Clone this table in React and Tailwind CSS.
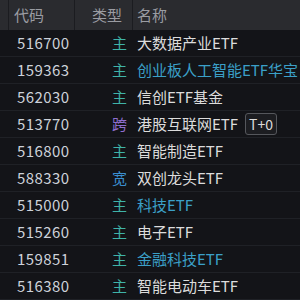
import React from "react";

const rows = [
  { code: "516700", type: "主", tc: "text-[#3fb3a8]", name: "大数据产业ETF", nc: "text-[#dcdcdc]" },
  { code: "159363", type: "主", tc: "text-[#3fb3a8]", name: "创业板人工智能ETF华宝", nc: "text-[#3ba0c8]" },
  { code: "562030", type: "主", tc: "text-[#3fb3a8]", name: "信创ETF基金", nc: "text-[#dcdcdc]" },
  { code: "513770", type: "跨", tc: "text-[#8f6fd0]", name: "港股互联网ETF", nc: "text-[#dcdcdc]", badge: true },
  { code: "516800", type: "主", tc: "text-[#3fb3a8]", name: "智能制造ETF", nc: "text-[#dcdcdc]" },
  { code: "588330", type: "宽", tc: "text-[#3a8fd0]", name: "双创龙头ETF", nc: "text-[#dcdcdc]" },
  { code: "515000", type: "主", tc: "text-[#3fb3a8]", name: "科技ETF", nc: "text-[#3ba0c8]" },
  { code: "515260", type: "主", tc: "text-[#3fb3a8]", name: "电子ETF", nc: "text-[#dcdcdc]" },
  { code: "159851", type: "主", tc: "text-[#3fb3a8]", name: "金融科技ETF", nc: "text-[#3ba0c8]" },
  { code: "516380", type: "主", tc: "text-[#3fb3a8]", name: "智能电动车ETF", nc: "text-[#dcdcdc]" },
];

export default function App() {
  return (
    <div
      className="w-[300px] h-[300px] overflow-hidden bg-[#131418] text-[15px]"
      style={{ fontFamily: '"Noto Sans CJK SC", "Noto Sans", sans-serif' }}
    >
      <div className="flex h-[30px] bg-[#2a2b2f] text-[#9a9ca2] items-center">
        <div className="w-[9px] h-full border-r border-[#1b1c20]" />
        <div className="w-[66px] h-full flex items-center pl-[5px] border-r border-[#1b1c20]">代码</div>
        <div className="w-[58px] h-full flex items-center justify-end pr-[10px] border-r border-[#1b1c20]">类型</div>
        <div className="flex-1 h-full flex items-center pl-[4px] whitespace-nowrap">名称</div>
      </div>
      {rows.map((r) => (
        <div key={r.code} className="flex h-[27px] items-center border-b border-[#1f2126] whitespace-nowrap">
          <div className="w-[75px] pl-[17px] text-[#cdd2da] tracking-[0.4px]">{r.code}</div>
          <div className={`w-[58px] pr-[6px] text-right ${r.tc}`}>{r.type}</div>
          <div className={`flex-1 pl-[4px] flex items-center ${r.nc}`}>
            <span>{r.name}</span>
            {r.badge && (
              <span className="ml-[7px] h-[22px] px-[3px] flex items-center border border-[#55575c] rounded-[3px] bg-[#1c1d21] text-[#dcdcdc] text-[14px]">
                T+0
              </span>
            )}
          </div>
        </div>
      ))}
    </div>
  );
}
